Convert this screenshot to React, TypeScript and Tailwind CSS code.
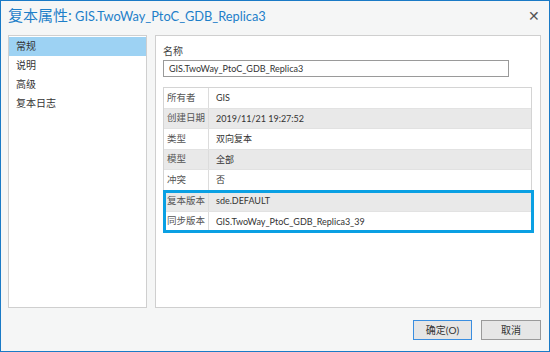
import React from 'react';

const FONT = 'Lato, "Noto Sans CJK SC", sans-serif';

const rows = [
  { label: '所有者', value: 'GIS' },
  { label: '创建日期', value: '2019/11/21 19:27:52' },
  { label: '类型', value: '双向复本' },
  { label: '模型', value: '全部' },
  { label: '冲突', value: '否' },
  { label: '复本版本', value: 'sde.DEFAULT' },
  { label: '同步版本', value: 'GIS.TwoWay_PtoC_GDB_Replica3_39' },
];

const navItems = ['常规', '说明', '高级', '复本日志'];

const Row: React.FC<{ label: string; value: string; shaded: boolean }> = ({ label, value, shaded }) => (
  <div className={`flex h-[20.6px] items-center border-b border-[#e2e2e2] ${shaded ? 'bg-[#e9e9e9]' : 'bg-white'}`}>
    <div className="w-[45px] h-full flex items-center pl-[3px] border-r border-[#dcdcdc] text-[#555] text-[9.5px] whitespace-nowrap">
      {label}
    </div>
    <div className="pl-[7px] text-[#333] whitespace-nowrap">{value}</div>
  </div>
);

const App: React.FC = () => {
  return (
    <div
      className="w-[550px] h-[352px] bg-[#f5f6f6] border border-[#1a7ac6] flex flex-col text-[9px]"
      style={{ fontFamily: FONT }}
    >
      {/* Title bar */}
      <div className="h-[34px] flex items-start justify-between pl-[7px] pr-[9px] pt-[3px]">
        <span className="text-[#1e7fc9] leading-[22px] whitespace-nowrap">
          <span className="text-[15px]">复本属性:</span>
          <span className="text-[12.8px]"> GIS.TwoWay_PtoC_GDB_Replica3</span>
        </span>
        <span className="text-[#555] text-[14px] leading-[20px] mt-[2px]">✕</span>
      </div>

      {/* Body */}
      <div className="flex gap-[8px] pl-[7px] pr-[8px] h-[273px]">
        {/* Left nav */}
        <div className="w-[139px] bg-white border border-[#cfcfcf] pt-[1px] text-[10px]">
          {navItems.map((item, i) => (
            <div
              key={item}
              className={`h-[19px] flex items-center pl-[7px] text-[#333] ${i === 0 ? 'bg-[#9dd2f3]' : ''}`}
            >
              {item}
            </div>
          ))}
        </div>

        {/* Right panel */}
        <div className="flex-1 bg-white border border-[#cfcfcf] pl-[7px] pr-[8px] pt-[7px]">
          <div className="text-[#444] leading-[16px] text-[10px]">名称</div>
          <div className="mt-[1px] w-[346px] h-[17px] border border-[#9a9a9a] flex items-center pl-[5px] text-[#333]">
            GIS.TwoWay_PtoC_GDB_Replica3
          </div>

          <div className="mt-[10px] relative w-[369px] border border-[#d4d4d4] border-b-0">
            {rows.map((r, i) => (
              <Row key={r.label} label={r.label} value={r.value} shaded={i % 2 === 1} />
            ))}
            {/* highlight around the version rows */}
            <div className="absolute left-[-1px] right-[-3px] top-[102px] h-[43px] border-[3px] border-[#0aa0e3]" />
          </div>
        </div>
      </div>

      {/* Footer */}
      <div className="flex-1 flex items-center justify-end gap-[9px] pr-[8px] pt-[1px] text-[10px]">
        <button className="w-[59px] h-[20px] border border-[#3a8ee0] bg-[#e6e6e6] text-[#333] flex items-center justify-center">
          确定(O)
        </button>
        <button className="w-[60px] h-[20px] border border-[#9a9a9a] bg-[#e6e6e6] text-[#333] flex items-center justify-center">
          取消
        </button>
      </div>
    </div>
  );
};

export default App;
